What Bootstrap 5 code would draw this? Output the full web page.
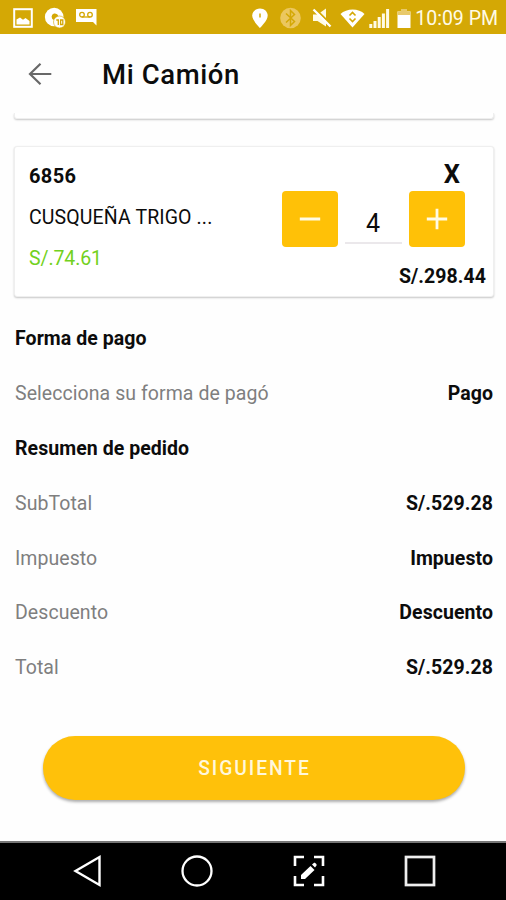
<!DOCTYPE html>
<html lang="es">
<head>
<meta charset="utf-8">
<meta name="viewport" content="width=device-width, initial-scale=1">
<title>Mi Camión</title>
<link href="https://cdn.jsdelivr.net/npm/bootstrap@5.3.0/dist/css/bootstrap.min.css" rel="stylesheet">
<style>
  body { font-family: Roboto, "Noto Sans", sans-serif; font-size: 19.5px; line-height: 24px; letter-spacing: .06px; color: #0c0c0c; background: #fefefe; }
  svg { display: block; flex: none; }
  .screen { height: 900px; }
  .status-bar { height: 34px; background: #d4a805; color: #fffbe6; padding: 1px 8px 0 12px; }
  .status-left { gap: 10px; }
  .status-time { font-size: 19.5px; padding-top: 2px; letter-spacing: 0; }
  .app-bar { height: 79px; padding: 2px 27px 0; gap: 49px; }
  .app-title { font-size: 27.5px; line-height: 32px; font-weight: 500; letter-spacing: .6px; }
  .page-body { padding: 0 12px 0 14px; }
  .item-card { border: 1px solid #efefef; border-radius: 3px; box-shadow: 0 1px 2px rgba(0,0,0,.22); background: #fff; }
  .item-prev { height: 6px; border-top: 0; border-top-left-radius: 0; border-top-right-radius: 0; margin-bottom: 27px; clip-path: inset(0 -4px -4px -4px); }
  .item-current { height: 151px; padding: 15px 7px 0 14px; }
  .item-info { gap: 17px; padding-top: 2px; }
  .item-code { font-size: 20px; letter-spacing: .4px; }
  .item-name { padding-top: 1px; letter-spacing: .12px; }
  .item-price { color: #72d120; letter-spacing: -.1px; }
  .item-side { width: 206px; }
  .item-remove { font-size: 25.5px; line-height: 24px; padding-right: 26px; }
  .qty-row { gap: 7px; margin: 5px 0 17px 1.5px; }
  .qty-btn { width: 56px; height: 56px; border-radius: 4px; background: #ffc107; }
  .qty-value { width: 57px; height: 53px; font-size: 25px; line-height: 30px; padding-top: 18px; border-bottom: 2px solid #ebe8eb; }
  .item-total { padding-top: 1px; }
  .summary { padding: 15px 1px 0; }
  .summary-row { height: 54.8px; }
  .summary-label { color: #7f7f7f; }
  .next-btn { height: 64px; margin: 40.400px 29.500px 0 28.500px; background: #ffc10a; color: #fff7dc; font-size: 19.3px; font-weight: 500; letter-spacing: 1.9px; padding: 9px 12px 6px 14px; box-shadow: 0 2px 3px rgba(0,0,0,.32); }
  .nav-keys { height: 59px; background: #000; border-top: 2px solid #777; padding: 0 68.500px 1px 72.500px; }
</style>
<script src="https://cdn.jsdelivr.net/npm/bootstrap@5.3.0/dist/js/bootstrap.bundle.min.js"></script>
</head>
<body>
<div class="screen d-flex flex-column overflow-hidden">
  <div class="status-bar d-flex justify-content-between align-items-center">
    <div class="status-left d-flex align-items-center">
      <svg width="22" height="22" viewBox="0 0 22 22"><rect x="2.200" y="2.200" width="17.600" height="17.600" fill="none" stroke="#fff" stroke-width="2"/><path d="M4.500 17.500v-5l3.500-2 3 2.200 2.500-1.700 4 3v3.500z" fill="#fff"/></svg>
      <svg width="22" height="22" viewBox="0 0 22 22"><circle cx="10.200" cy="10" r="9.300" fill="#fff"/><path d="M10 6.500a4 4 0 0 1 4.500 2.700L10 13a3.400 3.400 0 0 1 0-6.500z" fill="#d4a805"/><circle cx="15.500" cy="15" r="6" fill="#fff" stroke="#d4a805" stroke-width=".6"/><path d="M12.300 13h2v5m2.300-5h2.200v4.500h-2.200z" fill="none" stroke="#d4a805" stroke-width="1.300"/></svg>
      <svg width="22" height="22" viewBox="0 0 22 22"><path d="M0 2H20.500V18.500l-3.500-3.500H0z" fill="#fff"/><circle cx="6" cy="7.700" r="2.300" fill="none" stroke="#d4a805" stroke-width="1.300"/><circle cx="14" cy="7.700" r="2.300" fill="none" stroke="#d4a805" stroke-width="1.300"/><path d="M6 10h8" stroke="#d4a805" stroke-width="1.300"/></svg>
    </div>
    <div class="d-flex align-items-center">
      <svg width="164" height="24" viewBox="251 5 164 24">
        <path d="M260 7.500c-4.500 0-7.800 3.200-7.800 7.300C252.200 19.500 260 27 260 27s7.700-7.500 7.700-12.200c0-4.100-3.300-7.300-7.700-7.300z" fill="#fff"/><path d="M260 12.500v4" stroke="#d4a805" stroke-width="1.500"/>
        <circle cx="290.500" cy="17" r="10.300" fill="#ebc75f"/><path d="M286 12.500l8.500 8-4 4V9.500l4 4-8.500 8" fill="none" stroke="#d4a805" stroke-width="1.500"/>
        <path d="M313 13.500h4.500l8.500-6v18l-8.500-5.500H313z" fill="#fffbe6"/><path d="M315 7.500l18 18" stroke="#d4a805" stroke-width="2"/><path d="M313.500 8.500l17 17" stroke="#fff" stroke-width="2.300"/>
        <path d="M340.500 13c6-6 18.500-6 24 0l-12 13.500z" fill="#fff"/><path d="M349.500 14.500l3-3 3 3M349.500 17.500l3 3 3-3" fill="none" stroke="#d4a805" stroke-width="1.600"/>
        <path d="M370.800 27v-4M375 27v-7M379.200 27V16M383.400 27V12.500M387.600 27V8" stroke="#fffbe6" stroke-width="3"/>
        <path d="M401 8h6v2.500h3.500V27h-13V10.500h3.500z" fill="#fff"/><path d="M401 8h6v2.500h3.500V14h-13v-3.500h3.500z" fill="#e8c96a"/>
      </svg>
      <span class="status-time">10:09 PM</span>
    </div>
  </div>

  <header class="app-bar d-flex align-items-center">
    <svg width="26" height="26" viewBox="0 0 26 26"><path d="M24.300 12H3M13.500 1.800L3 12l10.500 10.200" fill="none" stroke="#686868" stroke-width="2.200"/></svg>
    <h1 class="app-title m-0">Mi Camión</h1>
  </header>

  <main class="page-body">
    <div class="item-card item-prev"></div>
    <div class="item-card item-current d-flex justify-content-between">
      <div class="item-info d-flex flex-column">
        <div class="item-code fw-bold">6856</div>
        <div class="item-name">CUSQUEÑA TRIGO ...</div>
        <div class="item-price">S/.74.61</div>
      </div>
      <div class="item-side">
        <div class="item-remove fw-bold text-end">X</div>
        <div class="qty-row d-flex">
          <button class="qty-btn btn border-0 p-0 d-flex justify-content-center align-items-center" aria-label="Menos"><svg width="22" height="22" viewBox="0 0 22 22"><path d="M.8 11h20.400" stroke="#fffbe6" stroke-width="3"/></svg></button>
          <div class="qty-value text-center">4</div>
          <button class="qty-btn btn border-0 p-0 d-flex justify-content-center align-items-center" aria-label="Más"><svg width="22" height="22" viewBox="0 0 22 22"><path d="M.8 11h20.400M11 .8v20.400" stroke="#fffbe6" stroke-width="2.800"/></svg></button>
        </div>
        <div class="item-total fw-bold text-end">S/.298.44</div>
      </div>
    </div>

    <section class="summary">
      <div class="summary-row d-flex align-items-center fw-bold">Forma de pago</div>
      <div class="summary-row d-flex align-items-center justify-content-between"><span class="summary-label">Selecciona su forma de pagó</span><span class="fw-bold">Pago</span></div>
      <div class="summary-row d-flex align-items-center fw-bold">Resumen de pedido</div>
      <div class="summary-row d-flex align-items-center justify-content-between"><span class="summary-label">SubTotal</span><span class="fw-bold">S/.529.28</span></div>
      <div class="summary-row d-flex align-items-center justify-content-between"><span class="summary-label">Impuesto</span><span class="fw-bold">Impuesto</span></div>
      <div class="summary-row d-flex align-items-center justify-content-between"><span class="summary-label">Descuento</span><span class="fw-bold">Descuento</span></div>
      <div class="summary-row d-flex align-items-center justify-content-between"><span class="summary-label">Total</span><span class="fw-bold">S/.529.28</span></div>
    </section>
    <div class="d-flex">
      <button class="next-btn btn border-0 rounded-pill flex-grow-1">SIGUIENTE</button>
    </div>
  </main>

  <nav class="nav-keys d-flex justify-content-between align-items-center mt-auto">
    <svg width="30" height="34" viewBox="0 0 30 34"><path d="M26.500 3v28L2.500 17z" fill="none" stroke="#fff" stroke-width="2.400"/></svg>
    <svg width="34" height="34" viewBox="0 0 34 34"><circle cx="17" cy="17" r="14.500" fill="none" stroke="#fff" stroke-width="2.300"/></svg>
    <svg width="34" height="34" viewBox="0 0 34 34"><path d="M3 12V3h9M22 3h9v9M31 22v9h-9M12 31H3v-9" fill="none" stroke="#fff" stroke-width="2.600"/><path d="M9 25v-4l9.500-9 4 4L13 25zM20 10.500l1.800-1.600c1-.9 3.600 1.600 2.700 2.700L23 13.500z" fill="#fff"/></svg>
    <svg width="34" height="34" viewBox="0 0 34 34"><rect x="3" y="3" width="28" height="28" fill="none" stroke="#eee" stroke-width="2.700"/></svg>
  </nav>
</div>
</body>
</html>
